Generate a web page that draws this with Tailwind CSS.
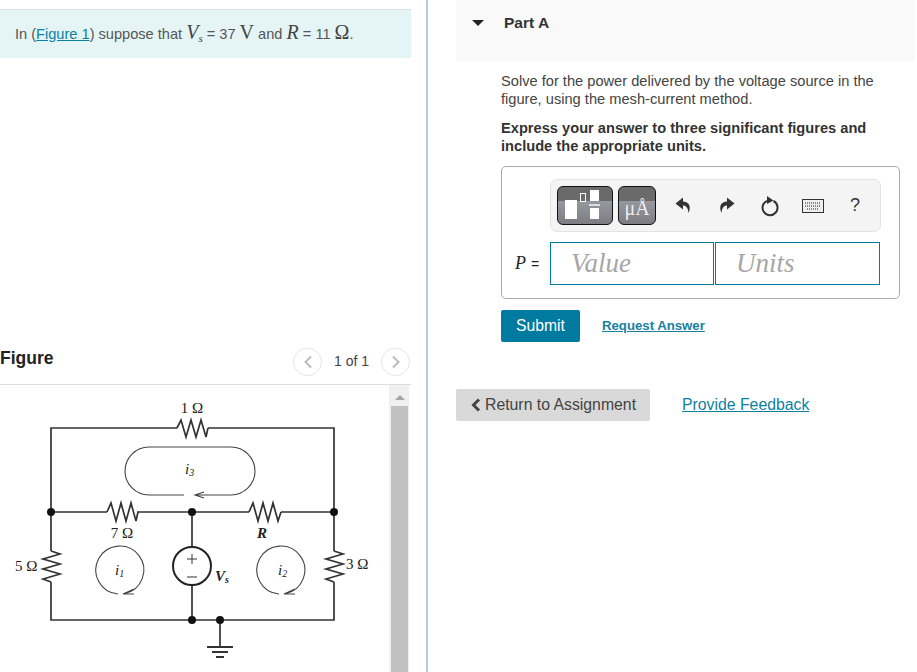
<!DOCTYPE html>
<html lang="en">
<head>
  <meta charset="UTF-8" />
  <title>Part A</title>
  <script src="https://cdn.jsdelivr.net/npm/@tailwindcss/browser@4"></script>
</head>
<body class="bg-white text-[#333] font-['Liberation_Sans',Arial,sans-serif] overflow-hidden">
  <div class="flex w-[917px] h-[672px] overflow-hidden">
    <!-- Left: statement and figure -->
    <div class="w-[426px] h-full shrink-0 pr-[15px]">
      <div class="mt-[9px] h-[49px] border-t border-[#dbe3e3] bg-[#e5f5f6] pl-[15px] pt-[11px] text-[14.600px] leading-[22px] text-[#555] whitespace-nowrap">
        In (<a href="#" class="text-[#0a80a0] underline">Figure 1</a>) suppose that
        <span class="font-['Liberation_Serif',serif] text-[20px] italic text-[#444]">V<span class="text-[11px] relative top-[3px]">s</span></span> = 37
        <span class="font-['Liberation_Serif',serif] text-[20px] text-[#444]">V</span> and
        <span class="font-['Liberation_Serif',serif] text-[20px] italic text-[#444]">R</span> = 11
        <span class="font-['Liberation_Serif',serif] text-[20px] text-[#444]">Ω</span>.
      </div>

      <div class="mt-[288px] h-[39px] flex items-center justify-between border-b border-[#ddd] pb-[7px]">
        <h2 class="mb-[6px] text-[17.500px] font-bold text-[#222]">Figure</h2>
        <div class="flex items-center text-[14px] text-[#444] mr-[1px]">
          <button class="w-[29px] h-[28px] rounded-full border border-[#e6e6e6] flex items-center justify-center">
            <svg width="10" height="14" viewBox="0 0 10 14"><path d="M8 1.500 2.500 7 8 12.500" fill="none" stroke="#bbb" stroke-width="2"/></svg>
          </button>
          <span class="w-[59px] text-center">1 of 1</span>
          <button class="w-[29px] h-[28px] rounded-full border border-[#e6e6e6] flex items-center justify-center">
            <svg width="10" height="14" viewBox="0 0 10 14"><path d="M2 1.500 7.500 7 2 12.500" fill="none" stroke="#bbb" stroke-width="2"/></svg>
          </button>
        </div>
      </div>

      <div class="flex h-[288px]">
        <svg class="w-[389px] h-[288px] shrink-0" viewBox="0 385 389 288" fill="none">
          <g stroke="#333" stroke-width="1.700">
            <path d="M177 428H51V551M51 582V620H334V582M334 551V428H208"/>
            <path d="M51 512H107M137 512H249M281 512H334"/>
            <path d="M177 428l4-8 5 17 5-17 5 17 5-17 5 17 2-9"/>
            <path d="M107 512l4-9 5 18 5-18 5 18 5-18 5 18 2-9"/>
            <path d="M249 512l4-9 5 18 5-18 5 18 5-18 5 18 3-9"/>
            <path d="M51 551l9 3-17 5 17 5-17 5 17 5-17 5 8 3"/>
            <path d="M334 551l9 3-17 5 17 5-17 5 17 5-17 5 8 3"/>
            <path d="M192 512V547M192 585V620M220 620V647"/>
            <path d="M207 647H233M212 652H228M216 657H224" stroke-width="2"/>
            <path d="M187 559H197M192 554V564M187 577H197" stroke-width="1"/>
          </g>
          <circle cx="192" cy="566" r="19" stroke="#222" stroke-width="2"/>
          <g fill="#111">
            <circle cx="51" cy="512" r="4"/>
            <circle cx="192" cy="512" r="4"/>
            <circle cx="334" cy="512" r="4"/>
            <circle cx="192" cy="620" r="4"/>
            <circle cx="220" cy="620" r="4"/>
          </g>
          <g stroke="#444" stroke-width="1.100">
            <path d="M184 495H149A24 24 0 0 1 149 447H231A24 24 0 0 1 231 495H195M204 492 195 495 204 498"/>
            <path d="M118 594A24 24 0 1 1 125 593.500M134 589 123 594 134 594"/>
            <path d="M279 594A24 24 0 1 1 286 593.500M295 589 284 594 295 594"/>
          </g>
          <g class="font-['Liberation_Serif',serif]" font-size="15" fill="#222" stroke="none">
            <text x="192" y="413" text-anchor="middle">1 Ω</text>
            <text x="122" y="538" text-anchor="middle">7 Ω</text>
            <text x="15" y="571">5 Ω</text>
            <text x="346" y="569">3 Ω</text>
            <text x="262" y="538" text-anchor="middle" font-style="italic" font-weight="bold">R</text>
            <text x="215" y="581" font-style="italic" font-weight="bold">V<tspan font-size="10" dy="2">s</tspan></text>
            <text x="185" y="474" font-style="italic">i<tspan font-size="10" dy="2">3</tspan></text>
            <text x="115" y="575" font-style="italic">i<tspan font-size="10" dy="2">1</tspan></text>
            <text x="278" y="575" font-style="italic">i<tspan font-size="10" dy="2">2</tspan></text>
          </g>
        </svg>
        <div class="w-[20px] h-full bg-[#f0f0f0] pl-[2px] pr-[1px]">
          <div class="h-[21px] flex justify-center pt-[10px]">
            <div class="w-0 h-0 border-x-[5px] border-x-transparent border-b-[5px] border-b-[#a3a3a3]"></div>
          </div>
          <div class="h-full bg-[#c1c1c1]"></div>
        </div>
      </div>
    </div>

    <!-- Divider -->
    <div class="w-[2px] h-full shrink-0 bg-[#b8cce0]"></div>

    <!-- Right: question -->
    <div class="w-[459px] ml-[28px] shrink-0">
      <div class="h-[61px] bg-[#f9f9f9] flex items-start pt-[14px] pl-[16px]">
        <div class="mt-[6px] w-0 h-0 border-x-[6px] border-x-transparent border-t-[6px] border-t-[#222]"></div>
        <h3 class="ml-[20px] text-[15.500px] leading-[18px] font-bold text-[#333]">Part A</h3>
      </div>

      <div class="pl-[45px] pr-[14px]">
        <p class="mt-[11px] text-[14.650px] leading-[18px] text-[#444]">Solve for the power delivered by the voltage source in the figure, using the mesh-current method.</p>
        <p class="mt-[11px] text-[14.650px] leading-[18px] font-bold text-[#333]">Express your answer to three significant figures and include the appropriate units.</p>

        <div class="mt-[11px] w-[399px] h-[133px] border border-[#aaa] rounded-[5px] pl-[48px] pt-[12px]">
          <div class="w-[331px] h-[53px] bg-[#f4f4f4] border border-[#e3e3e3] rounded-[7px] flex items-center pl-[6px]">
            <div class="relative w-[56px] h-[39px] rounded-[6px] border border-[#111] bg-[linear-gradient(#6a6a6a_0,#6a6a6a_37%,#98989f_37%,#7c7c82_100%)]">
              <span class="absolute left-[7px] top-[13px] w-[12px] h-[19px] bg-white"></span>
              <span class="absolute left-[22px] top-[6px] w-[6px] h-[9px] border border-white"></span>
              <span class="absolute left-[32px] top-[3px] w-[9px] h-[11px] bg-white"></span>
              <span class="absolute left-[31px] top-[17px] w-[11px] h-[2px] bg-white/70"></span>
              <span class="absolute left-[32px] top-[21px] w-[9px] h-[11px] bg-white"></span>
            </div>
            <div class="relative ml-[5px] w-[38px] h-[39px] rounded-[6px] border border-[#111] bg-[linear-gradient(#6a6a6a_0,#6a6a6a_37%,#98989f_37%,#7c7c82_100%)] text-[#eee] font-['Liberation_Serif',serif] text-[20px] leading-[24px] text-center pt-[9px]">μÅ</div>
            <svg class="ml-[19px]" width="17" height="17" viewBox="0 0 17 17"><path fill="#333" d="M8 .5 .5 6.500 8 12.500V8.500c3 0 5 2 5.500 7.500 3-6.500.5-11.500-5.500-11.500z"/></svg>
            <svg class="ml-[26px]" width="17" height="17" viewBox="0 0 17 17"><path fill="#333" d="M9 .5l7.500 6L9 12.500V8.500c-3 0-5 2-5.500 7.500-3-6.500-.5-11.500 5.500-11.500z"/></svg>
            <svg class="ml-[25px]" width="20" height="22" viewBox="0 0 20 22" fill="none"><path stroke="#333" stroke-width="2" d="M13.500 6a7.500 7.500 0 1 1-6.500-.2"/><path fill="#333" d="M7 1 13.500 5.500 7 9z"/></svg>
            <svg class="ml-[22px]" width="22" height="14" viewBox="0 0 22 14" fill="none"><rect x=".5" y=".5" width="21" height="13" fill="#eee" stroke="#333"/><path stroke="#666" stroke-width="1.500" stroke-dasharray="1 1" d="M3 4H19M3 7H19M5 10H17"/></svg>
            <span class="ml-[26px] text-[18px] text-[#333]">?</span>
          </div>
          <div class="relative mt-[10px] flex">
            <span class="absolute -left-[35px] top-[10px] text-[14px] leading-[22px] text-[#222] whitespace-nowrap"><i class="font-['Liberation_Serif',serif] text-[18px] mr-[1px]">P</i> =</span>
            <div class="w-[164px] h-[43px] border border-[#007c9e] pl-[20px] font-['Liberation_Serif',serif] italic text-[27px] leading-[41px] text-[#a6a6a6]">Value</div>
            <div class="ml-[1px] w-[165px] h-[43px] border border-[#007c9e] pl-[20px] font-['Liberation_Serif',serif] italic text-[27px] leading-[41px] text-[#a6a6a6]">Units</div>
          </div>
        </div>

        <div class="mt-[11px] flex items-center">
          <button class="w-[79px] h-[32px] bg-[#007a9e] rounded-[2px] text-white text-[15.700px]">Submit</button>
          <a href="#" class="ml-[22px] text-[13.200px] font-bold text-[#1a7f9f] underline">Request Answer</a>
        </div>
      </div>

      <div class="mt-[47px] flex items-center">
        <button class="w-[194px] h-[32px] bg-[#d9d9d9] rounded-[2px] flex items-center pl-[15px] text-[15.800px] text-[#444]">
          <svg width="10" height="14" viewBox="0 0 10 14"><path d="M8 1.500 2.500 7 8 12.500" fill="none" stroke="#444" stroke-width="3"/></svg>
          <span class="ml-[4px]">Return to Assignment</span>
        </button>
        <a href="#" class="ml-[32px] text-[15.800px] text-[#0d7f9f] underline">Provide Feedback</a>
      </div>
    </div>
  </div>
</body>
</html>
